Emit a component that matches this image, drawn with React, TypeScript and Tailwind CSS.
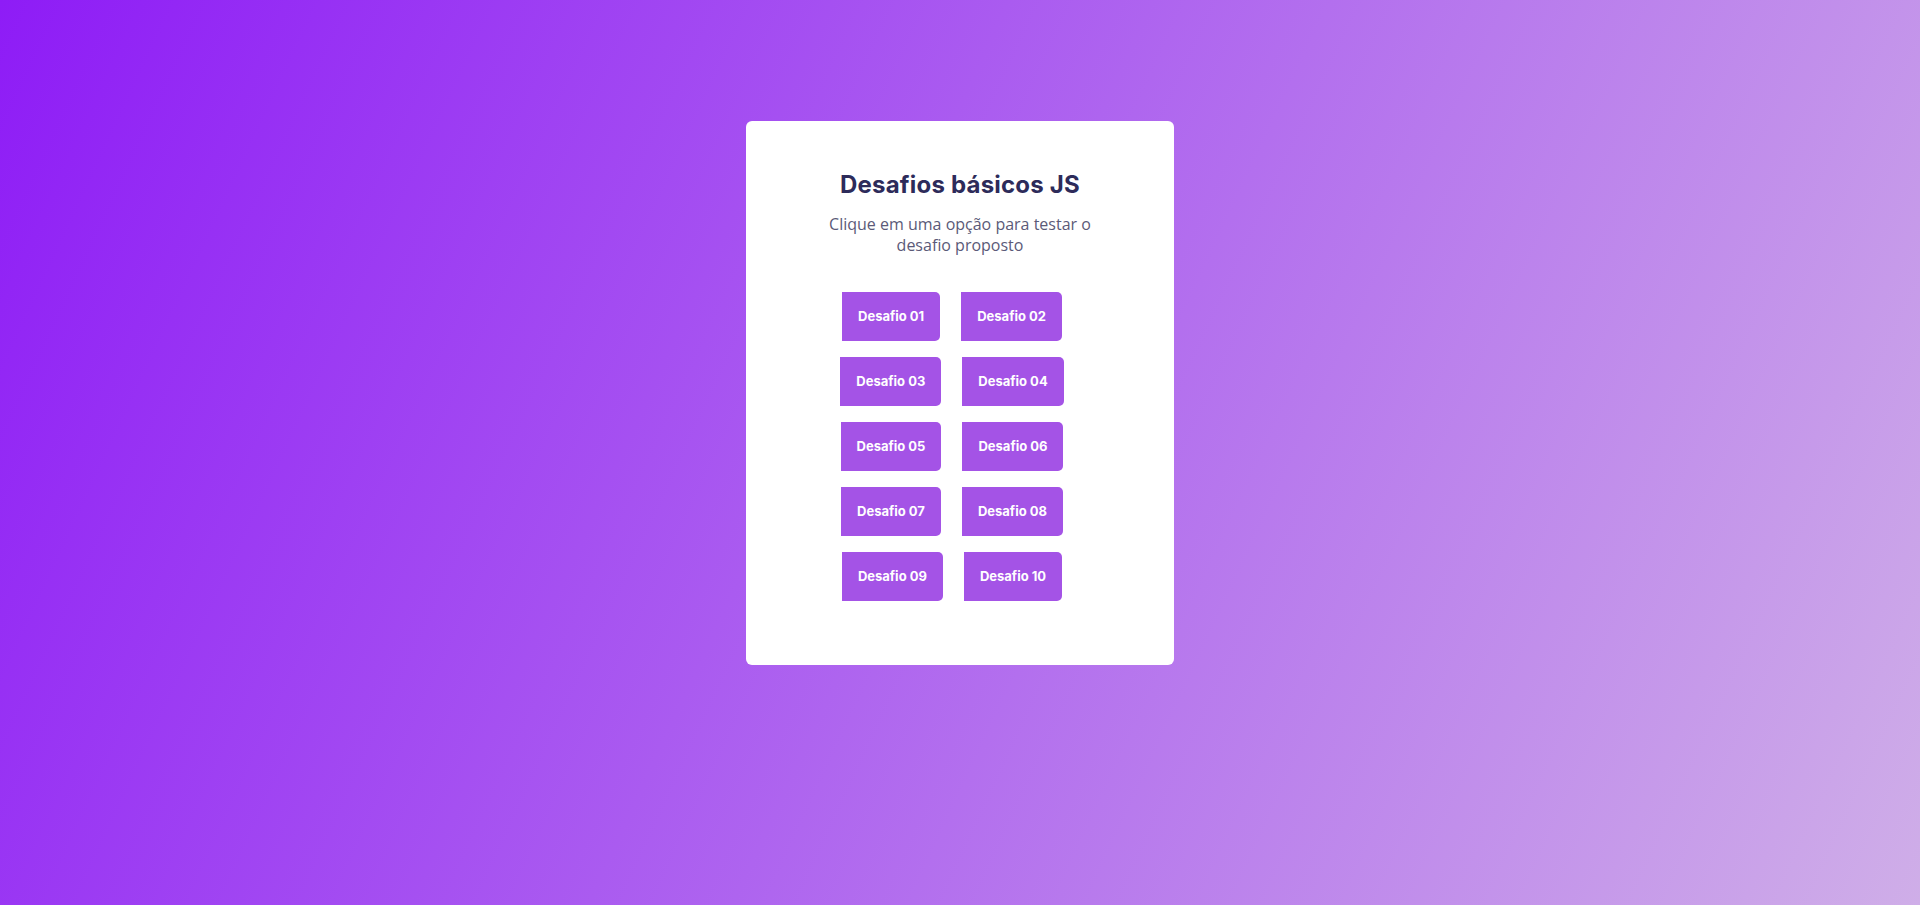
import React from "react";

const rows = [
  ["Desafio 01", "Desafio 02"],
  ["Desafio 03", "Desafio 04"],
  ["Desafio 05", "Desafio 06"],
  ["Desafio 07", "Desafio 08"],
  ["Desafio 09", "Desafio 10"],
];

export default function App() {
  return (
    <div className="w-full h-[905px] bg-[linear-gradient(115deg,#8e1cf6,#cfaee8)] flex justify-center items-start pt-[121px]">
      <div className="w-[428px] h-[544px] bg-white rounded-[6px] flex flex-col items-center pt-[49px]">
        <h1 className="font-['Inter',sans-serif] font-bold text-[24px] leading-[30px] text-[#2d2b5a] tracking-[0.2px]">
          Desafios básicos JS
        </h1>
        <p className="mt-[14px] w-[280px] text-center font-['Open_Sans',sans-serif] text-[16px] leading-[21px] text-[#5b5a78]">
          Clique em uma opção para testar o desafio proposto
        </p>
        <div className="mt-[36px] flex flex-col gap-[16px]">
          {rows.map((r, i) => (
            <div key={i} className="flex justify-center gap-[21px] pr-[16px]">
              {r.map((t) => (
                <button
                  key={t}
                  className="h-[49px] px-[16px] bg-[#a453e6] text-white rounded-r-[5px] font-['Inter',sans-serif] font-bold text-[13px]"
                >
                  {t}
                </button>
              ))}
            </div>
          ))}
        </div>
      </div>
    </div>
  );
}
